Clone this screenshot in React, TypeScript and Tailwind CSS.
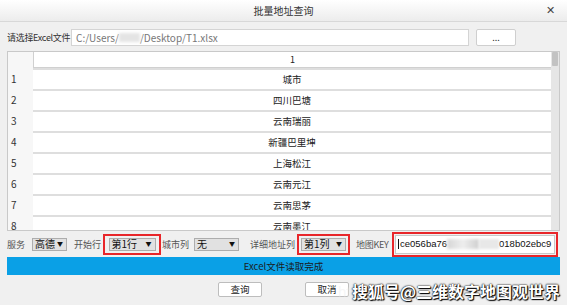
import React from "react";

const rows = ["城市", "四川巴塘", "云南瑞丽", "新疆巴里坤", "上海松江", "云南元江", "云南思茅", "云南墨江"];

const Select = ({ value, className }: { value: string; className: string }) => (
  <div className={`h-[13px] shrink-0 flex items-center justify-between bg-[#e1e1e1] border border-[#adadad] pl-[2px] pr-[3px] text-[10px] leading-none text-[#111] whitespace-nowrap ${className}`}>
    <span>{value}</span>
    <span className="text-[6px] leading-none">▼</span>
  </div>
);

export default function App() {
  return (
    <div className="w-[567px] h-[305px] bg-[#f0f0f0] flex flex-col overflow-hidden relative font-['Noto_Sans_CJK_SC','Noto_Sans',sans-serif] text-[#222]">
      {/* Title */}
      <div className="h-[22px] shrink-0 relative flex items-center justify-center bg-gradient-to-b from-[#ffffff] to-[#ececec] border-b border-[#d8d8d8]">
        <span className="text-[10px] text-[#333]">批量地址查询</span>
        <span className="absolute right-[12px] top-[4px] text-[11px] leading-none text-[#444]">✕</span>
      </div>

      <div className="px-[7px] flex flex-col">
        {/* File row */}
        <div className="mt-[7px] h-[17px] flex items-center">
          <span className="w-[64px] shrink-0 text-[9px] tracking-[-0.3px] text-[#333] whitespace-nowrap overflow-hidden">请选择Excel文件</span>
          <div className="w-[398px] shrink-0 h-[17px] bg-white border border-[#d4d4d4] flex items-center pl-[4px] text-[10px] text-[#777] whitespace-nowrap">
            <span>C:/Users/</span>
            <span className="w-[21px] h-[9px] bg-[#e4e4e4] blur-[1.5px]" />
            <span>/Desktop/T1.xlsx</span>
          </div>
          <div className="ml-[7px] w-[40px] h-[17px] bg-white border border-[#cfcfcf] rounded-[2px] flex items-center justify-center text-[9px] text-[#333] leading-none">...</div>
        </div>

        {/* Table */}
        <div className="mt-[5px] h-[180px] border border-[#c9c9c9] bg-white flex overflow-hidden">
          <div className="flex-1 flex flex-col overflow-hidden">
            <div className="h-[16px] shrink-0 flex">
              <div className="w-[25px] bg-[#f7f7f7]" />
              <div className="flex-1 border-l border-b border-[#d0d0d0] flex items-center justify-center text-[9px] text-[#222]">1</div>
            </div>
            {rows.map((r, i) => (
              <div key={r} className="h-[21px] shrink-0 flex">
                <div className="w-[25px] bg-[#f7f7f7] flex items-center pl-[3px] text-[10px] text-[#333]">{i + 1}</div>
                <div className="flex-1 border-t-2 border-[#dedede] flex items-center justify-center text-[9.5px] text-[#222]">{r}</div>
              </div>
            ))}
          </div>
          <div className="w-[8px] bg-[#e6e6e6] flex flex-col">
            <div className="h-[14px] mx-[1px] bg-[#c2c2c2] rounded-[1px]" />
          </div>
        </div>

        {/* Controls */}
        <div className="h-[26px] flex items-center text-[9px] leading-none text-[#555] whitespace-nowrap">
          <span className="w-[25px] shrink-0">服务</span>
          <Select value="高德" className="w-[35px]" />
          <span className="ml-[7px] w-[29px] shrink-0">开始行</span>
          <div className="w-[58px] h-[21px] shrink-0 border-2 border-[#e8262a] flex items-center justify-center">
            <Select value="第1行" className="w-[47px]" />
          </div>
          <span className="w-[33px] pl-[1px] shrink-0">城市列</span>
          <Select value="无" className="w-[45px]" />
          <span className="ml-[11px] w-[47px] shrink-0">详细地址列</span>
          <div className="w-[53px] h-[21px] shrink-0 border-2 border-[#e8262a] flex items-center justify-center">
            <Select value="第1列" className="w-[45px]" />
          </div>
          <span className="ml-[6px] w-[36px] shrink-0 tracking-[-0.3px]">地图KEY</span>
          <div className="w-[166px] h-[25px] shrink-0 border-2 border-[#e8262a] flex items-center p-[1px]">
            <div className="w-full h-full bg-white border border-[#c8c8c8] flex items-center pl-[2px] text-[9.5px] text-[#111] whitespace-nowrap overflow-hidden font-['Liberation_Sans',sans-serif]">
              <span className="border-l border-[#111] pl-[1px]">ce056ba76</span>
              <span className="w-[32px] h-[10px] bg-gradient-to-r from-[#d6d6d6] via-[#eeeeee] to-[#cfcfcf] blur-[1.5px]" />
              <span className="w-[20px] h-[10px] bg-[#e8e8e8] blur-[1px]" />
              <span>018b02ebc9</span>
            </div>
          </div>
        </div>

        {/* Status */}
        <div className="h-[18px] bg-[#0aa0e6] flex items-center justify-center text-[9.5px] text-[#1a1a1a]">Excel文件读取完成</div>

        {/* Buttons */}
        <div className="mt-[7px] flex justify-center gap-[43px]">
          <div className="w-[44px] h-[15px] bg-white border border-[#bdbdbd] rounded-[2px] flex items-center justify-center text-[9.5px] text-[#222]">查询</div>
          <div className="w-[44px] h-[15px] bg-white border border-[#bdbdbd] rounded-[2px] flex items-center justify-center text-[9.5px] text-[#222]">取消</div>
        </div>
      </div>

      {/* Watermark */}
      <span className="absolute left-[338px] top-[281px] text-[15px] text-[#e8e8e8]/40 font-['Liberation_Sans',sans-serif]">http</span>
      <span className="absolute left-[352px] top-[279px] text-[16px] font-bold text-white whitespace-nowrap [text-shadow:0_0_2px_#000,0_0_1px_#000,1px_1px_1px_#000]">搜狐号@三维数字地图观世界</span>
    </div>
  );
}
